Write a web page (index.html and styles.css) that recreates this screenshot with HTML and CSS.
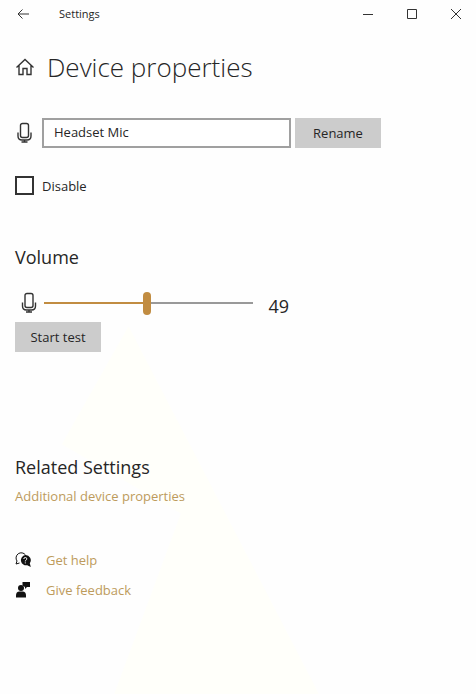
FILE: index.html
```html
<!DOCTYPE html>
<html lang="en">
<head>
  <meta charset="UTF-8">
  <meta name="viewport" content="width=device-width, initial-scale=1">
  <title>Settings</title>
  <link rel="stylesheet" href="styles.css">
</head>
<body>
  <header class="titlebar">
    <button class="titlebar-button back" aria-label="Back">
      <svg width="12" height="12" viewBox="0 0 12 12"><path d="M5.500 1.500 1 6l4.500 4.500M1 6h11"/></svg>
    </button>
    <span class="titlebar-text">Settings</span>
    <div class="window-controls">
      <button class="titlebar-button" aria-label="Minimize">
        <svg width="12" height="12" viewBox="0 0 12 12"><path d="M1 6.500h10"/></svg>
      </button>
      <button class="titlebar-button" aria-label="Maximize">
        <svg width="12" height="12" viewBox="0 0 12 12"><path d="M1.500 1.500h9v9h-9z"/></svg>
      </button>
      <button class="titlebar-button" aria-label="Close">
        <svg width="12" height="12" viewBox="0 0 12 12"><path d="m1 1 10 10M11 1 1 11"/></svg>
      </button>
    </div>
  </header>

  <main class="content">
    <div class="page-title">
      <svg class="icon-line" width="20" height="20" viewBox="0 0 20 20"><path d="M1.500 10.500 10 2.500l8.500 8M4 8.500v9h4v-6h4v6h4v-9"/></svg>
      <h1>Device properties</h1>
    </div>

    <div class="name-row">
      <svg class="icon-line" width="20" height="22" viewBox="0 0 20 22"><rect x="5.500" y="1.500" width="8" height="14" rx="2"/><path d="M3 10.500V14q0 4 4 4h5q4 0 4-4v-3.500M9.500 18v2.500M6.500 20h6"/></svg>
      <input type="text" class="name-input" value="Headset Mic" aria-label="Device name">
      <button class="button">Rename</button>
    </div>

    <label class="disable">
      <input type="checkbox">
      Disable
    </label>

    <h2>Volume</h2>
    <div class="volume-row">
      <svg class="icon-line" width="20" height="22" viewBox="0 0 20 22"><rect x="6" y="1.500" width="8" height="14" rx="2"/><path d="M3.500 10.500V14q0 4 4 4h5q4 0 4-4v-3.500M10 18v2.500M7 20h6"/></svg>
      <input type="range" id="volume" class="slider" min="0" max="100" value="49" style="--level: 49%" aria-label="Volume">
      <output class="level" id="level" for="volume">49</output>
    </div>
    <button class="button">Start test</button>

    <section class="related">
      <h2>Related Settings</h2>
      <a href="#">Additional device properties</a>
    </section>

    <nav class="support">
      <a href="#">
        <svg width="16" height="16" viewBox="0 0 16 16">
          <path class="bubble" d="M4.500 11 1 12l1-3A5 5 0 1 1 10.500 3"/>
          <path d="M10.300 3a5.200 5.200 0 1 0 2 10.200l3.500 1.800-1-3.800A5.200 5.200 0 0 0 10.300 3z"/>
          <path class="mark" d="M8.800 7q0-1.500 1.500-1.500T11.800 6.900q0 .8-.8 1.200t-.7 1.300M10.300 10.400v1"/>
        </svg>
        Get help
      </a>
      <a href="#">
        <svg width="16" height="16" viewBox="0 0 16 16">
          <path d="M7.500 0H15v5h-3l-2 2V5L7.500 3.500z"/>
          <circle cx="6" cy="6" r="3"/>
          <path d="M1 15.500v-2q0-4 3.500-4h3q3.500 0 3.500 4v2z"/>
        </svg>
        Give feedback
      </a>
    </nav>
  </main>

  <script>
    const slider = document.getElementById("volume");
    slider.addEventListener("input", function () {
      slider.style.setProperty("--level", slider.value + "%");
      document.getElementById("level").textContent = slider.value;
    });
  </script>
</body>
</html>
```
FILE: styles.css
```css
* {
  box-sizing: border-box;
}

body {
  margin: 0;
  min-height: 100vh;
  background: #fefefe;
  color: #262626;
  font-family: "Segoe UI", "Open Sans", sans-serif;
  font-size: 13px;
  line-height: 16px;
}

/* faint beam of light behind the content */
body::before {
  content: "";
  position: absolute;
  z-index: -1;
  inset: 0;
  background: #fffffa;
  clip-path: polygon(27% 47%, 67% 100%, 24% 100%, 38% 74%, 13% 64%);
}

button,
input {
  font: inherit;
  color: inherit;
}

h1,
h2 {
  margin: 0;
  font-weight: 400;
}

h1 {
  font-size: 26px;
  font-weight: 300;
  line-height: 34px;
}

h2 {
  font-size: 18px;
  line-height: 24px;
}

a {
  color: #bd9b5c;
  text-decoration: none;
}

svg {
  flex: none;
}

.titlebar {
  display: flex;
  align-items: center;
  height: 28px;
  padding-left: 8px;
  font-size: 11px;
}

.titlebar-button {
  display: flex;
  justify-content: center;
  align-items: center;
  width: 44px;
  height: 28px;
  padding: 0;
  border: none;
  background: none;
}

.titlebar-button svg {
  fill: none;
  stroke: #333;
}

.back {
  width: 30px;
}

.titlebar-text {
  margin-left: 21px;
}

.window-controls {
  display: flex;
  margin-left: auto;
  margin-right: -2px;
}

.content {
  padding: 22px 15px;
}

.icon-line {
  fill: none;
  stroke: #333;
  stroke-width: 1.4;
}

.page-title {
  display: flex;
  align-items: center;
  gap: 12px;
}

.name-row {
  display: flex;
  align-items: center;
  max-width: 366px;
  margin-top: 34px;
}

.name-input {
  flex: 1;
  min-width: 0;
  height: 30px;
  margin: 0 4px 0 7px;
  padding: 0 10px 2px;
  border: 2px solid #a0a0a0;
  background: #fff;
}

.button {
  width: 86px;
  height: 30px;
  padding: 0;
  border: none;
  background: #ccc;
}

.disable {
  display: flex;
  align-items: center;
  gap: 8px;
  width: fit-content;
  margin: 28px 0 50px;
}

.disable input {
  appearance: none;
  width: 19px;
  height: 19px;
  margin: 0;
  border: 2px solid #333;
  background: #fff;
}

.disable input:checked {
  background: #c18c41;
}

.volume-row {
  display: flex;
  align-items: center;
  max-width: 274px;
  height: 30px;
  margin: 19px 0 4px;
  padding-left: 4px;
}

.slider {
  appearance: none;
  flex: 1;
  min-width: 0;
  height: 24px;
  margin: 0 15px 0 5px;
  background: linear-gradient(to right, #c18c41 var(--level), #999 var(--level)) center / 100% 2px no-repeat;
}

.slider::-webkit-slider-thumb {
  appearance: none;
  width: 8px;
  height: 23px;
  border-radius: 4px;
  background: #c18c41;
}

.slider::-moz-range-thumb {
  width: 8px;
  height: 23px;
  border: none;
  border-radius: 4px;
  background: #c18c41;
}

.level {
  padding-top: 6px;
  font-size: 18px;
  line-height: 24px;
}

.related {
  margin-top: 103px;
}

.related a {
  display: block;
  margin-top: 9px;
}

.support {
  display: flex;
  flex-direction: column;
  align-items: flex-start;
  gap: 14px;
  margin-top: 48px;
}

.support a {
  display: flex;
  align-items: center;
  gap: 15px;
}

.support svg {
  fill: #111;
}

.support .bubble {
  fill: none;
  stroke: #111;
}

.support .mark {
  fill: none;
  stroke: #fff;
}
```
